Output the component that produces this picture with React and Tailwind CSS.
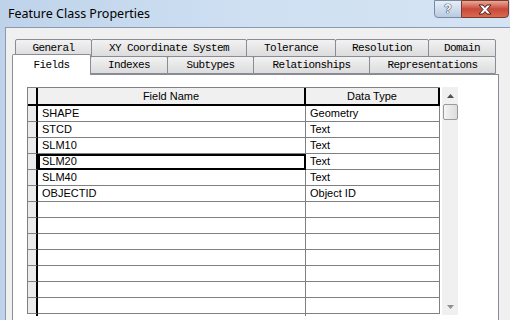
import React from "react";

const rows = [
  ["SHAPE", "Geometry"],
  ["STCD", "Text"],
  ["SLM10", "Text"],
  ["SLM20", "Text"],
  ["SLM40", "Text"],
  ["OBJECTID", "Object ID"],
  ["", ""],
  ["", ""],
  ["", ""],
  ["", ""],
  ["", ""],
  ["", ""],
  ["", ""],
];

const tabFont = { fontFamily: '"Liberation Mono", "DejaVu Sans Mono", monospace' };

function Tab({ w, children, selected }) {
  if (selected) {
    return (
      <div
        className={`relative z-10 -mt-[2px] -mb-[1px] h-[21px] ${w} flex items-center justify-center bg-white border border-b-0 border-[#898c95] rounded-t-[2px] text-[11px] tracking-[-0.6px] text-black`}
        style={tabFont}
      >
        {children}
      </div>
    );
  }
  return (
    <div
      className={`h-[18px] ${w} flex items-center justify-center border border-[#898c95] -ml-px first:ml-0 rounded-t-[2px] bg-gradient-to-b from-[#f2f2f2] to-[#dcdcdc] text-[11px] tracking-[-0.6px] text-black`}
      style={tabFont}
    >
      {children}
    </div>
  );
}

export default function App() {
  return (
    <div className="w-[510px] h-[320px] overflow-hidden relative bg-gradient-to-r from-[#bed3ea] via-[#cfe0f2] to-[#d4e4f4]">
      {/* title bar */}
      <div className="h-[27px] flex items-start relative">
        <div
          className="pl-[8px] pt-[5px] text-[12.5px] text-black"
          style={{ fontFamily: '"Noto Sans", "Open Sans", sans-serif' }}
        >
          Feature Class Properties
        </div>
        <div className="absolute top-0 right-[1px] flex">
          <div className="w-[28px] h-[18px] border border-[#7a8aa0] rounded-bl-[4px] bg-gradient-to-b from-[#e6eef8] to-[#b9cbe1] flex items-center justify-center">
            <span
              className="text-[12px] font-bold text-white leading-none"
              style={{
                fontFamily: '"Liberation Sans", sans-serif',
                textShadow: "0 0 1px #2c3e58, 0 0 1px #2c3e58, 0 0 1px #2c3e58",
              }}
            >
              ?
            </span>
          </div>
          <div className="w-[48px] h-[18px] -ml-px border border-[#7a3a30] rounded-br-[4px] bg-gradient-to-b from-[#e8a898] via-[#c8483a] to-[#d86a50] flex items-center justify-center">
            <svg width="14" height="11" viewBox="0 0 14 11">
              <path
                d="M1 1 H5 L7 3.5 L9 1 H13 L9 5.5 L13 10 H9 L7 7.5 L5 10 H1 L5 5.5 Z"
                fill="#ffffff"
                stroke="#4a2020"
                strokeWidth="1"
                strokeLinejoin="round"
              />
            </svg>
          </div>
        </div>
      </div>

      {/* body */}
      <div className="flex h-[293px]">
        <div className="w-[6px] border-r border-[#8a99ad]" />
        <div className="flex-1 bg-[#f0f0f0] border-t border-[#8a99ad] pl-[6px] pt-[11px]">
          <div className="w-[487px]">
            {/* back tab row */}
            <div className="flex pl-[3px]">
              <Tab w="w-[77px]">General</Tab>
              <Tab w="w-[156px]">XY Coordinate System</Tab>
              <Tab w="w-[90px]">Tolerance</Tab>
              <Tab w="w-[94px]">Resolution</Tab>
              <Tab w="w-[68px]">Domain</Tab>
            </div>
            {/* front tab row */}
            <div className="flex -mt-px items-end">
              <Tab w="w-[79px]" selected>
                Fields
              </Tab>
              <Tab w="w-[78px]">Indexes</Tab>
              <Tab w="w-[87px]">Subtypes</Tab>
              <Tab w="w-[117px]">Relationships</Tab>
              <Tab w="w-[127px]">Representations</Tab>
            </div>
            {/* panel */}
            <div className="h-[260px] bg-white border border-[#898c95] pl-[14px] pt-[12px] flex items-start">
              {/* grid */}
              <div
                className="w-[413px] text-[11px] text-black"
                style={{ fontFamily: '"Liberation Sans", Arial, sans-serif' }}
              >
                <div className="border-l border-t border-[#808080]">
                  <div className="flex h-[18px]">
                    <div className="w-[10px] bg-[#f0f0f0] border-r-2 border-b-2 border-black" />
                    <div className="w-[268px] bg-[#f0f0f0] border-r-2 border-b-2 border-black flex items-center justify-center">
                      Field Name
                    </div>
                    <div className="w-[134px] bg-[#f0f0f0] border-r-2 border-b-2 border-black flex items-center justify-center">
                      Data Type
                    </div>
                  </div>
                  {rows.map((r, i) => (
                    <div key={i} className="flex h-[16px]">
                      <div className="w-[10px] bg-[#ececec] border-r-2 border-b border-r-black border-b-[#808080]" />
                      <div
                        className={`w-[268px] border-r border-b border-[#808080] pl-[4px] flex items-center leading-none ${
                          i === 3 ? "outline-2 outline-black -outline-offset-2" : ""
                        }`}
                      >
                        {r[0]}
                      </div>
                      <div className="w-[134px] border-r border-b border-[#808080] pl-[4px] flex items-center leading-none">
                        {r[1]}
                      </div>
                    </div>
                  ))}
                </div>
                <div className="flex h-[2px]">
                  <div className="w-[11px] border-r-2 border-black" />
                  <div className="w-[268px] border-r border-[#808080]" />
                </div>
              </div>
              {/* scrollbar */}
              <div className="ml-[2px] w-[16px] h-[228px] bg-[#f0f0f0] flex flex-col items-center">
                <div className="h-[17px] w-full flex items-center justify-center">
                  <svg width="7" height="4" viewBox="0 0 7 4">
                    <path d="M0 4 L3.5 0 L7 4 Z" fill="#505050" />
                  </svg>
                </div>
                <div className="w-[15px] h-[16px] border border-[#9a9a9a] rounded-[2px] bg-gradient-to-r from-[#f4f4f4] to-[#dcdcdc]" />
                <div className="flex-1" />
                <div className="h-[17px] w-full flex items-center justify-center">
                  <svg width="7" height="4" viewBox="0 0 7 4">
                    <path d="M0 0 L7 0 L3.5 4 Z" fill="#909090" />
                  </svg>
                </div>
              </div>
            </div>
          </div>
        </div>
      </div>
    </div>
  );
}
